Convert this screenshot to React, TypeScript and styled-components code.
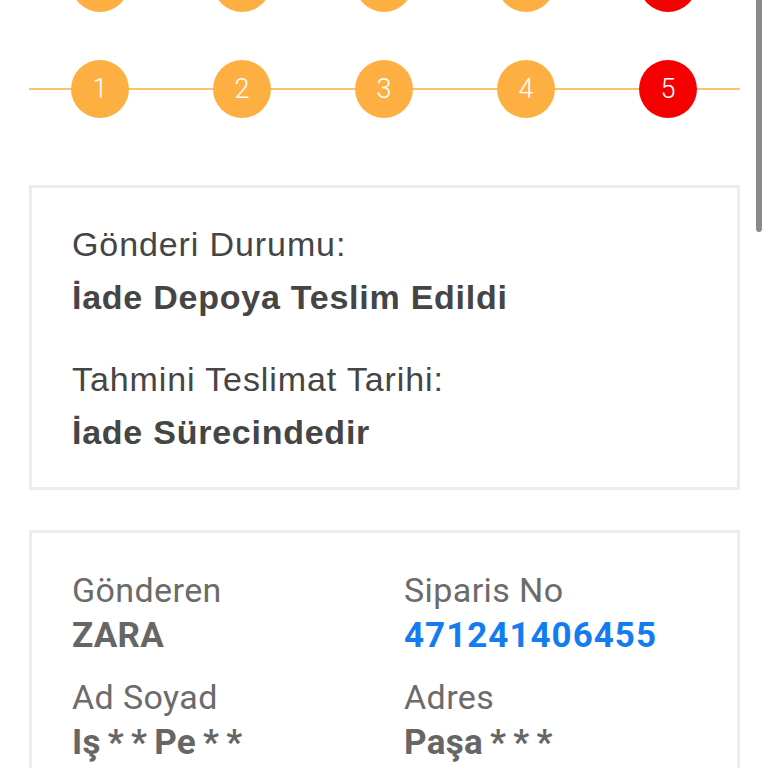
import React from 'react';
import styled, { createGlobalStyle } from 'styled-components';

const GlobalStyle = createGlobalStyle`
	html, body {
		margin: 0;
		padding: 0;
		background: #ffffff;
		overflow: hidden;
	}
	body {
		font-family: 'Liberation Sans', Arial, sans-serif;
	}
`;

const Page = styled.div`
	position: relative;
	width: 768px;
	height: 768px;
	overflow: hidden;
	background: #ffffff;
`;

const Scrollbar = styled.div`
	position: absolute;
	top: -4px;
	right: 6px;
	width: 6px;
	height: 236px;
	border-radius: 3px;
	background: #8a8a8a;
`;

const StepRow = styled.div<{ $offset: number; $line?: boolean }>`
	position: relative;
	display: flex;
	justify-content: space-between;
	align-items: center;
	margin-top: ${(p) => p.$offset}px;
	padding: 0 71px;

	&::before {
		content: '';
		display: ${(p) => (p.$line ? 'block' : 'none')};
		position: absolute;
		left: 29px;
		right: 28px;
		top: 50%;
		height: 2px;
		margin-top: -1px;
		background: #fcc26a;
	}
`;

const Step = styled.div<{ $active?: boolean }>`
	position: relative;
	width: 58px;
	height: 58px;
	border-radius: 50%;
	background: ${(p) => (p.$active ? '#f50000' : '#fdb041')};
	color: #ffffff;
	display: flex;
	align-items: center;
	justify-content: center;
	font-family: Roboto, 'Liberation Sans', sans-serif;
	font-weight: 300;
	font-size: 27px;
`;

const Spacer = styled.div`
	height: 67px;
`;

const Card = styled.section`
	margin: 0 28px 0 29px;
	border: 3px solid #ececec;
	padding: 30px 40px 28px;
	display: flex;
	flex-direction: column;
`;

const StatusGroup = styled.div`
	display: flex;
	flex-direction: column;
	& + & {
		margin-top: 29px;
	}
`;

const StatusLabel = styled.div`
	font-size: 34px;
	line-height: 53px;
	letter-spacing: 0.9px;
	color: #454545;
	font-weight: 400;
	white-space: nowrap;
`;

const StatusValue = styled(StatusLabel)`
	font-weight: 700;
	letter-spacing: 0.75px;
`;

const InfoCard = styled(Card)`
	margin-top: 40px;
	padding: 35px 40px 30px;
	display: grid;
	grid-template-columns: 332px 1fr;
	row-gap: 17px;
	font-family: Roboto, 'Liberation Sans', sans-serif;
`;

const InfoItem = styled.div`
	display: flex;
	flex-direction: column;
`;

const InfoLabel = styled.div`
	font-size: 34px;
	line-height: 45px;
	letter-spacing: 0.4px;
	color: #6b6b6b;
	white-space: nowrap;
`;

const InfoValue = styled.div<{ $link?: boolean }>`
	font-size: 35px;
	line-height: 45px;
	font-weight: 700;
	letter-spacing: ${(p) => (p.$link ? 1 : 0.3)}px;
	word-spacing: -2px;
	color: ${(p) => (p.$link ? '#137cf0' : '#666666')};
	white-space: nowrap;
`;

const steps = [1, 2, 3, 4, 5];

const info = [
	{ label: 'Gönderen', value: 'ZARA' },
	{ label: 'Siparis No', value: '471241406455', link: true },
	{ label: 'Ad Soyad', value: 'Iş * * Pe * *' },
	{ label: 'Adres', value: 'Paşa * * *' },
];

export default function App() {
	return (
		<Page>
			<GlobalStyle />
			<StepRow $offset={-46}>
				{steps.map((s) => (
					<Step key={s} $active={s === 5} />
				))}
			</StepRow>
			<StepRow $offset={48} $line>
				{steps.map((s) => (
					<Step key={s} $active={s === 5}>
						{s}
					</Step>
				))}
			</StepRow>
			<Spacer />
			<Card>
				<StatusGroup>
					<StatusLabel>Gönderi Durumu:</StatusLabel>
					<StatusValue>İade Depoya Teslim Edildi</StatusValue>
				</StatusGroup>
				<StatusGroup>
					<StatusLabel>Tahmini Teslimat Tarihi:</StatusLabel>
					<StatusValue>İade Sürecindedir</StatusValue>
				</StatusGroup>
			</Card>
			<InfoCard>
				{info.map((item) => (
					<InfoItem key={item.label}>
						<InfoLabel>{item.label}</InfoLabel>
						<InfoValue $link={item.link}>{item.value}</InfoValue>
					</InfoItem>
				))}
			</InfoCard>
			<Scrollbar />
		</Page>
	);
}
